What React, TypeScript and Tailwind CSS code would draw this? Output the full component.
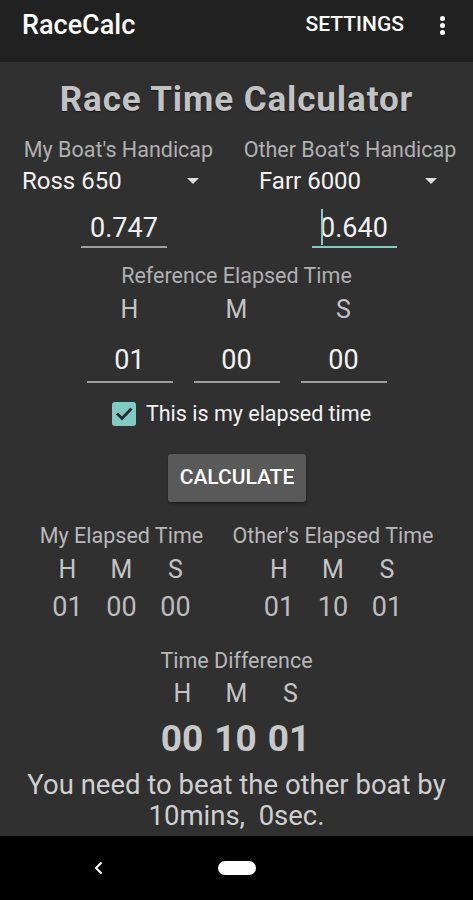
import React from 'react';

const font = { fontFamily: 'Roboto, "Noto Sans", sans-serif' };

function Caret() {
  return (
    <svg width="12" height="7" viewBox="0 0 12 7" className="shrink-0">
      <path d="M0 0 L12 0 L6 6 Z" fill="#e0e0e0" />
    </svg>
  );
}

function Cells({ items }: { items: string[] }) {
  return (
    <>
      {items.map((c, i) => (
        <div key={i} className="w-[54px] text-center">{c}</div>
      ))}
    </>
  );
}

export default function App() {
  return (
    <div style={font} className="w-[473px] h-[900px] flex flex-col bg-[#303030] overflow-hidden">
      {/* App bar */}
      <div className="h-[62px] bg-[#212121] flex items-center pl-[22px] pr-[28px] shrink-0">
        <div className="text-[27px] font-medium text-white flex-1 pb-[12px]">RaceCalc</div>
        <div className="text-[21px] font-medium text-white pb-[12px] mr-[36px]">SETTINGS</div>
        <div className="flex flex-col gap-[2px] pb-[12px]">
          <span className="w-[5px] h-[5px] rounded-full bg-white" />
          <span className="w-[5px] h-[5px] rounded-full bg-white" />
          <span className="w-[5px] h-[5px] rounded-full bg-white" />
        </div>
      </div>

      {/* Main */}
      <div className="h-[774px] shrink-0 flex flex-col">
        <div className="mt-[18px] h-[40px] flex items-center justify-center text-[35px] tracking-[0.9px] font-bold text-[#c2c2c2] [text-shadow:0_1px_1px_rgba(0,0,0,0.6)]">
          Race Time Calculator
        </div>

        <div className="mt-[18px] h-[24px] flex items-center text-[21.5px] text-[#b0b0b0] whitespace-nowrap">
          <div className="w-[237px] text-center">My Boat's Handicap</div>
          <div className="w-[236px] text-center pr-[10px]">Other Boat's Handicap</div>
        </div>

        <div className="mt-[5px] h-[28px] flex items-center text-[24px] text-[#f2f2f2]">
          <div className="w-[237px] flex items-center pl-[22px] pr-[38px]">
            <span className="flex-1">Ross 650</span>
            <Caret />
          </div>
          <div className="w-[236px] flex items-center pl-[22px] pr-[36px]">
            <span className="flex-1">Farr 6000</span>
            <Caret />
          </div>
        </div>

        <div className="mt-[13px] h-[40px] flex items-end text-[27px] text-[#f2f2f2]">
          <div className="w-[237px] flex justify-center pl-[11px]">
            <div className="w-[86px] h-[40px] flex items-center justify-center border-b-2 border-[#9e9e9e] pt-[2px]">0.747</div>
          </div>
          <div className="w-[236px] flex justify-center pr-[2px]">
            <div className="relative w-[85px] h-[40px] flex items-center justify-center border-b-2 border-[#80cbc4] pt-[2px]">
              <span className="absolute left-[9px] top-[1px] w-[2px] h-[36px] bg-[#80cbc4]" />
              0.640
            </div>
          </div>
        </div>

        <div className="mt-[16px] h-[24px] flex items-center justify-center text-[21.5px] text-[#b0b0b0]">
          Reference Elapsed Time
        </div>

        <div className="mt-[9px] h-[26px] flex items-center justify-center gap-[21px] text-[25px] text-[#c4c4c4]">
          <div className="w-[86px] text-center">H</div>
          <div className="w-[86px] text-center">M</div>
          <div className="w-[86px] text-center">S</div>
        </div>

        <div className="mt-[17px] h-[43px] flex justify-center gap-[21px] text-[27px] text-[#f2f2f2]">
          {['01', '00', '00'].map((v, i) => (
            <div key={i} className="w-[86px] flex items-center justify-center border-b-2 border-[#9e9e9e]">{v}</div>
          ))}
        </div>

        <div className="mt-[19px] h-[24px] flex items-center justify-center gap-[10px] pl-[10px]">
          <div className="w-[24px] h-[24px] rounded-[3px] bg-[#80cbc4] flex items-center justify-center">
            <svg width="24" height="24" viewBox="0 0 24 24">
              <path d="M5 11.5 L10 16.5 L19.5 6.5" stroke="#2a2a2a" strokeWidth="2.8" fill="none" />
            </svg>
          </div>
          <div className="text-[21.5px] text-[#f2f2f2]">This is my elapsed time</div>
        </div>

        <div className="mt-[28px] h-[48px] flex justify-center pl-[1px]">
          <div className="w-[138px] h-[48px] rounded-[3px] bg-[#595959] shadow-[0_2px_3px_rgba(0,0,0,0.35)] flex items-center justify-center text-[21px] font-medium text-white">
            CALCULATE
          </div>
        </div>

        <div className="mt-[22px] h-[24px] flex items-center text-[21.5px] text-[#b8b8b8] whitespace-nowrap">
          <div className="w-[237px] flex justify-center pl-[6px]">
            <span>My Elapsed Time</span>
          </div>
          <div className="w-[236px] flex justify-center pr-[44px]">
            <span>Other's Elapsed Time</span>
          </div>
        </div>

        <div className="mt-[10px] h-[24px] flex items-center text-[25px] text-[#c4c4c4]">
          <div className="w-[237px] flex justify-center pl-[6px]">
            <Cells items={['H', 'M', 'S']} />
          </div>
          <div className="w-[236px] flex justify-center pr-[44px]">
            <Cells items={['H', 'M', 'S']} />
          </div>
        </div>

        <div className="mt-[12px] h-[26px] flex items-center text-[27px] text-[#bdbdbd]">
          <div className="w-[237px] flex justify-center pl-[6px]">
            <Cells items={['01', '00', '00']} />
          </div>
          <div className="w-[236px] flex justify-center pr-[44px]">
            <Cells items={['01', '10', '01']} />
          </div>
        </div>

        <div className="mt-[29px] h-[24px] flex items-center justify-center text-[21.5px] text-[#b8b8b8]">
          Time Difference
        </div>

        <div className="mt-[9px] h-[24px] flex items-center justify-center text-[25px] text-[#c4c4c4]">
          <Cells items={['H', 'M', 'S']} />
        </div>

        <div className="mt-[14px] h-[38px] flex items-center justify-center gap-[11px] text-[37px] font-bold text-[#c8c8c8] pr-[2px]">
          <span>00</span>
          <span>10</span>
          <span>01</span>
        </div>

        <div className="mt-[11px] text-center text-[27.5px] leading-[31px] text-[#cfcfcf]">
          You need to beat the other boat by
          <br />
          10mins,&nbsp; 0sec.
        </div>
      </div>

      {/* Nav bar */}
      <div className="flex-1 bg-black flex items-center">
        <div className="w-[196px] flex justify-center pl-[2px]">
          <svg width="10" height="14" viewBox="0 0 10 14">
            <path d="M7.5 1.5 L2 7 L7.5 12.5" stroke="#ffffff" strokeWidth="2" fill="none" />
          </svg>
        </div>
        <div className="w-[38px] h-[14px] rounded-full bg-white ml-[22px]" />
      </div>
    </div>
  );
}
